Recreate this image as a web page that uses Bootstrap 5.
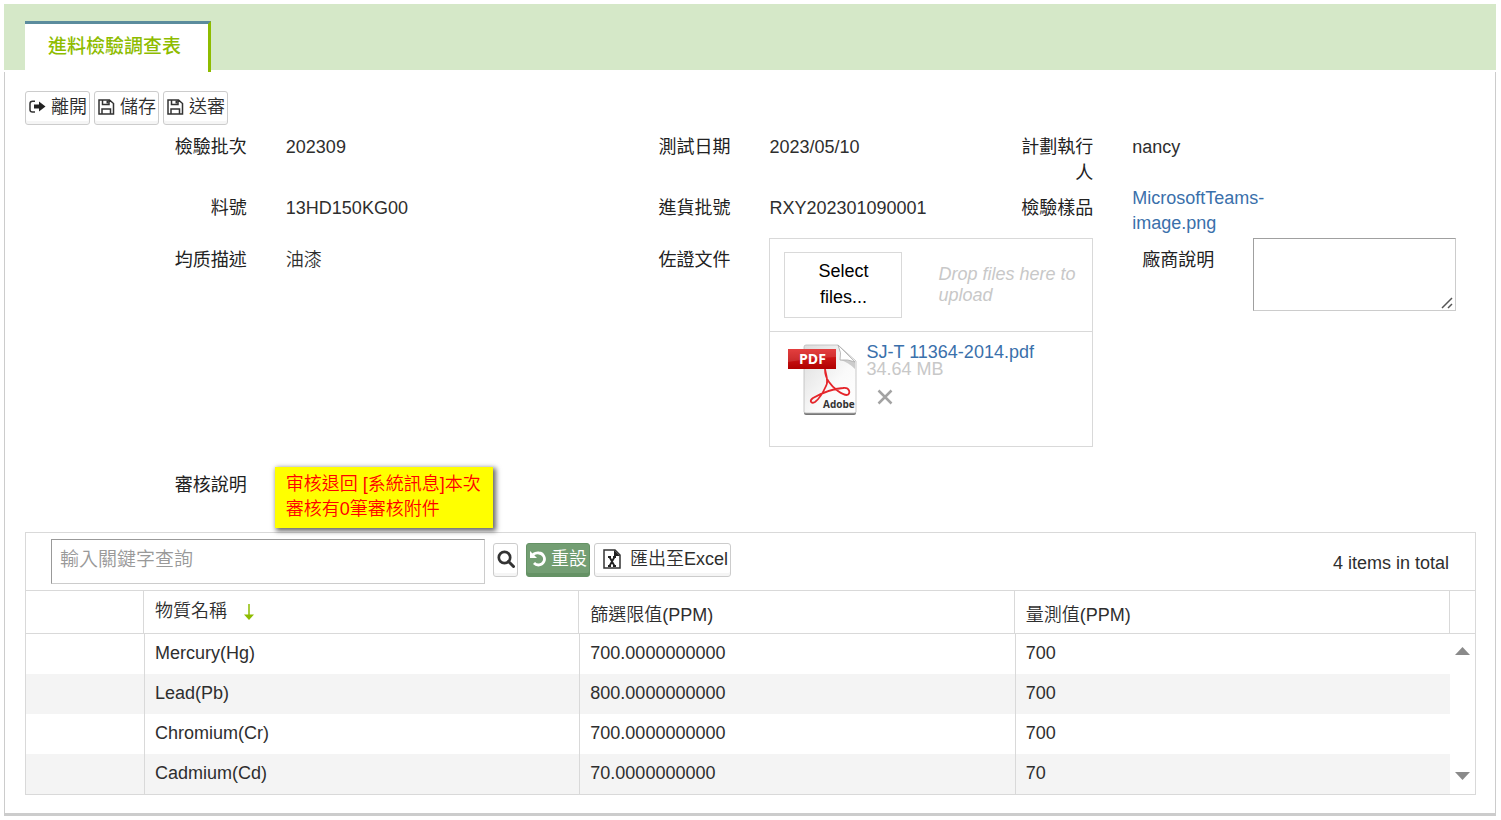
<!DOCTYPE html>
<html lang="zh-Hant">
<head>
<meta charset="utf-8">
<meta name="viewport" content="width=device-width, initial-scale=1">
<title>進料檢驗調查表</title>
<link href="https://cdn.jsdelivr.net/npm/bootstrap@5.3.0/dist/css/bootstrap.min.css" rel="stylesheet">
<style>
  body { padding: 4px 5px 4px 4px; font-family: "Liberation Sans", "Noto Sans CJK TC", sans-serif; font-size: 18px; line-height: 26px; font-weight: 350; color: #2e2e2e; background: #fff; }
  a { color: #3a70ab; text-decoration: none; }
  .tab-band { background: #d5e8c8; height: 66px; padding: 17px 21px 0; }
  .tab-band .nav-link { background: #fff; color: #8ebc00; font-weight: 500; font-size: 19px; line-height: 26px; width: 186px; height: 51px; padding: 10px 23px; border: 0; border-top: 3px solid #5b8c9d; border-right: 3px solid #8ebc00; border-radius: 0; text-align: left; white-space: nowrap; }
  .pane { border: 1px solid #ccc; border-top: 0; border-bottom-width: 3px; margin-top: 2px; padding: 19px 19px 18px 20px; }
  .tool-row { gap: 4px; }
  .btn-tool { display: inline-flex; align-items: center; gap: 5px; height: 34px; padding: 0 2px 3px 3px; font-size: 18px; font-weight: 350; line-height: 26px; color: #2e2e2e; background: #fff; border: 1px solid #ccc; border-radius: 3px; box-shadow: inset 0 -3px 0 #f5f5f5; white-space: nowrap; }
  .btn-tool:hover { background: #f4f4f4; color: #333; }
  .btn-reset, .btn-reset:hover { background: #739e73; border-color: #659265; color: #fff; box-shadow: inset 0 -3px 0 #659265; }
  .row { --bs-gutter-x: 40px; margin: 0; }
  .row > * { padding-left: 19px; }
  .field-label { display: block; padding-top: 9px; text-align: right; font-weight: 400; color: #222; }
  .field-value { padding-top: 9px; }
  .sample-row { padding-bottom: 2px; }
  .sample-link { line-height: 25px; }
  .note { margin: 4px -4px 0 -11px; padding: 5px 5px 6px 11px; line-height: 25px; background: #ff0; color: #f00; box-shadow: 2px 2px 5px 1px rgba(0,0,0,.6); position: relative; z-index: 1; }
  .vendor-note { display: block; width: 100%; height: 73px; border: 1px solid #ccc; border-top-color: #a0a0a0; border-left-color: #a0a0a0; border-radius: 0; resize: both; }
  .vendor-note::-webkit-resizer { background: url("data:image/svg+xml,%3Csvg xmlns='http://www.w3.org/2000/svg' width='15' height='15'%3E%3Cpath d='M2 13L12 3M8 13l4-4' stroke='%23555' stroke-width='1.500'/%3E%3C/svg%3E") no-repeat right bottom; }
  .uploader { border: 1px solid #d9d9d9; height: 209px; }
  .uploader-top { padding: 13px 14px; border-bottom: 1px solid #d9d9d9; }
  .btn-pick { width: 118px; height: 66px; padding: 0 20px 2px; border: 1px solid #d9d9d9; border-radius: 0; background: #fff; color: #000; font-size: 18px; line-height: 26px; flex: none; }
  .drop-hint { color: #c8c8c8; font-style: italic; line-height: 21px; padding-left: 36px; }
  .file-item { padding: 12px 17px; gap: 9px; line-height: 17px; }
  .file-size { color: #c8c8c8; }
  .btn-remove { border: 0; background: none; padding: 0; margin: 11px 0 0 11px; width: 16px; height: 16px; display: block; line-height: 0; }
  .grid-box { border: 1px solid #d9d9d9; }
  .grid-tools { height: 57px; padding: 6px 26px 0 25px; }
  .search-box { width: 434px; height: 45px; border: 1px solid #ccc; border-top-color: #999; border-left-color: #999; border-radius: 0; padding: 0 8px 4px; font-size: 19px; font-weight: 350; color: #333; }
  .search-box::placeholder { color: #999; opacity: 1; }
  .grid-total { line-height: 26px; padding-top: 11px; }
  .data-grid { table-layout: fixed; width: 100%; margin: 0; color: #2e2e2e; border-collapse: separate; border-spacing: 0; }
  .data-grid .pick-col { width: 118px; }
  .data-grid th { height: 44px; padding: 5px 10px 0 11px; font-weight: 350; border-top: 1px solid #d9d9d9; border-bottom: 1px solid #d9d9d9; border-right: 1px solid #d9d9d9; vertical-align: middle; }
  .data-grid th.sorted { padding-top: 0; padding-bottom: 3px; }
  .data-grid td { height: 40px; padding: 0 10px 2px; vertical-align: middle; border-left: 1px solid #d9d9d9; }
  .data-grid td:first-child { border-left: 0; }
  .data-grid tbody tr:nth-child(even) { background: #f4f4f4; }
  .scroll-col { width: 25px; flex: none; }
  .scroll-head { height: 44px; border-top: 1px solid #d9d9d9; border-bottom: 1px solid #d9d9d9; }
  .scroll-track { padding: 13px 0 14px; }
  svg { flex: none; }
</style>
</head>
<body>
<header class="tab-band">
  <ul class="nav"><li class="nav-item"><a class="nav-link active" href="#pane">進料檢驗調查表</a></li></ul>
</header>
<main class="pane" id="pane">
  <div class="tool-row d-flex">
    <button type="button" class="btn btn-tool"><svg width="17" height="16" viewBox="0 0 17 16"><path d="M6 2.200H3.500Q1 2.200 1 4.700v6Q1 13 3.500 13H6" fill="none" stroke="#333" stroke-width="1.500"/><path d="M5 5.500h5V2.500l6.500 5-6.500 5v-3H5z" fill="#222"/></svg>離開</button>
    <button type="button" class="btn btn-tool"><svg width="17" height="16" viewBox="0 0 17 16"><path d="M1 1h10.500L15.500 4.500V15H1zM4 15v-5h8.500v5M4.500 1v4.500h6.500V1" fill="none" stroke="#333" stroke-width="1.500"/><path d="M8.500 1.500h2v3h-2z" fill="#333"/></svg>儲存</button>
    <button type="button" class="btn btn-tool"><svg width="17" height="16" viewBox="0 0 17 16"><path d="M1 1h10.500L15.500 4.500V15H1zM4 15v-5h8.500v5M4.500 1v4.500h6.500V1" fill="none" stroke="#333" stroke-width="1.500"/><path d="M8.500 1.500h2v3h-2z" fill="#333"/></svg>送審</button>
  </div>

  <div class="row">
    <div class="col-2 field-label">檢驗批次</div><div class="col-3 field-value">202309</div>
    <div class="col-1 field-label">測試日期</div><div class="col-2 field-value">2023/05/10</div>
    <div class="col-1 field-label">計劃執行人</div><div class="col-2 field-value">nancy</div>
  </div>
  <div class="row sample-row">
    <div class="col-2 field-label">料號</div><div class="col-3 field-value">13HD150KG00</div>
    <div class="col-1 field-label">進貨批號</div><div class="col-2 field-value">RXY202301090001</div>
    <div class="col-1 field-label">檢驗樣品</div><div class="col-2 sample-link"><a href="#">MicrosoftTeams-image.png</a></div>
  </div>
  <div class="row">
    <div class="col-2 field-label">均质描述</div><div class="col-3 field-value">油漆</div>
    <div class="col-1 field-label">佐證文件</div>
    <div class="col-3">
      <div class="uploader">
        <div class="uploader-top d-flex align-items-center">
          <button type="button" class="btn-pick">Select files...</button>
          <span class="drop-hint">Drop files here to upload</span>
        </div>
        <div class="file-item d-flex">
          <svg width="70" height="74" viewBox="0 0 70 74">
            <defs>
              <linearGradient id="sheet" x2="1" y2="1"><stop stop-color="#dcdcdc"/><stop offset=".6" stop-color="#fafafa"/><stop offset="1" stop-color="#fff"/></linearGradient>
              <linearGradient id="band" x2="0" y2="1"><stop stop-color="#e02424"/><stop offset="1" stop-color="#b00000"/></linearGradient>
            </defs>
            <path d="M19 3h32l18 16v50q0 2-2 2H19q-2 0-2-2V5q0-2 2-2z" fill="#777"/>
            <path d="M19 1h32l18 16v51q0 1-2 1H19q-2 0-2-1V3q0-2 2-2z" fill="url(#sheet)" stroke="#bbb" stroke-width=".8"/>
            <path d="M53 16q8-1 15 2v7q-7-7-15-9z" fill="#ccc"/>
            <path d="M51 1q4 8 2 15 8-1 15 2z" fill="#fff" stroke="#aaa" stroke-width=".8"/>
            <path d="M38 25c1 7 4 12 1 17-4 9-7 13-11 16-4 2-6-1-2-4 7-4 18-9 30-10 7-1 8 6 4 7-5 0-14-7-18-13-3-4-4-8-4-13" fill="none" stroke="#e5252a" stroke-width="1.800"/>
            <path d="M1 5h48v20H1z" fill="url(#band)"/><path d="M1 5h48v8q-25 1-48 5z" fill="#fff" opacity=".12"/>
            <text x="12" y="20" font-family="Open Sans, sans-serif" font-weight="700" font-size="14" fill="#fff">PDF</text>
            <text x="36" y="64" font-family="Open Sans, sans-serif" font-weight="700" font-size="10" fill="#333">Adobe</text>
          </svg>
          <div>
            <a href="#">SJ-T 11364-2014.pdf</a>
            <div class="file-size">34.64 MB</div>
            <button type="button" class="btn-remove" aria-label="Remove"><svg width="16" height="16" viewBox="0 0 16 16"><path d="M1.500 1.500l13 13M14.500 1.500l-13 13" stroke="#a3a3a3" stroke-width="2.500"/></svg></button>
          </div>
        </div>
      </div>
    </div>
    <label class="col-1 field-label" for="vendor">廠商說明</label>
    <div class="col-2"><textarea class="vendor-note" id="vendor"></textarea></div>
  </div>
  <div class="row pt-3">
    <div class="col-2 field-label">審核說明</div>
    <div class="col-2"><div class="note">审核退回 [系統訊息]本次審核有0筆審核附件</div></div>
  </div>

  <section class="grid-box mt-1">
    <div class="grid-tools d-flex justify-content-between">
      <div class="d-flex align-items-start">
        <input type="text" class="search-box" placeholder="輸入關鍵字查詢" aria-label="輸入關鍵字查詢">
        <button type="button" class="btn btn-tool mt-1 ms-2" aria-label="查詢"><svg width="18" height="18" viewBox="0 0 18 18"><circle cx="7.500" cy="7.500" r="5.700" fill="none" stroke="#333" stroke-width="2.700"/><path d="M11.500 11.500l5 5" stroke="#333" stroke-width="3" stroke-linecap="round"/></svg></button>
        <button type="button" class="btn btn-tool btn-reset mt-1 ms-2"><svg width="16" height="18" viewBox="0 0 16 18"><path d="M3 4.500Q6 2.500 9 3a6 6 0 1 1-5 10" fill="none" stroke="#fff" stroke-width="2.800"/><path d="M0 1v7h7z" fill="#fff"/></svg>重設</button>
        <button type="button" class="btn btn-tool mt-1 ms-1 ps-2"><svg width="18" height="20" viewBox="0 0 18 20"><path d="M1 1h11l5 5v13H1z" fill="none" stroke="#333" stroke-width="1.500"/><path d="M11 1l6 6h-6z" fill="#222"/><path d="M5 8h3M10 8h3M5 17h3M10 17h3M6.500 8l5 9M11.500 8l-5 9" fill="none" stroke="#222" stroke-width="1.800"/></svg><span class="ps-1">匯出至Excel</span></button>
      </div>
      <div class="grid-total">4 items in total</div>
    </div>
    <div class="d-flex">
      <div class="flex-grow-1">
        <table class="data-grid">
          <thead><tr>
            <th class="pick-col"></th>
            <th class="sorted">物質名稱<svg class="ms-3" width="12" height="18" viewBox="0 0 12 18"><path d="M6 1v12" stroke="#8ebc00" stroke-width="1.500"/><path d="M1 11.500h10l-5 5.500z" fill="#8ebc00"/></svg></th>
            <th>篩選限值(PPM)</th><th>量測值(PPM)</th>
          </tr></thead>
          <tbody>
            <tr><td></td><td>Mercury(Hg)</td><td>700.0000000000</td><td>700</td></tr>
            <tr><td></td><td>Lead(Pb)</td><td>800.0000000000</td><td>700</td></tr>
            <tr><td></td><td>Chromium(Cr)</td><td>700.0000000000</td><td>700</td></tr>
            <tr><td></td><td>Cadmium(Cd)</td><td>70.0000000000</td><td>70</td></tr>
          </tbody>
        </table>
      </div>
      <div class="scroll-col d-flex flex-column">
        <div class="scroll-head"></div>
        <div class="scroll-track flex-grow-1 d-flex flex-column justify-content-between align-items-center">
          <svg width="15" height="8" viewBox="0 0 15 8"><path d="M0 8h15L7.500 0z" fill="#8a8a8a"/></svg>
          <svg width="15" height="8" viewBox="0 0 15 8"><path d="M0 0h15L7.500 8z" fill="#8a8a8a"/></svg>
        </div>
      </div>
    </div>
  </section>
</main>
<script src="https://cdn.jsdelivr.net/npm/bootstrap@5.3.0/dist/js/bootstrap.bundle.min.js"></script>
</body>
</html>
